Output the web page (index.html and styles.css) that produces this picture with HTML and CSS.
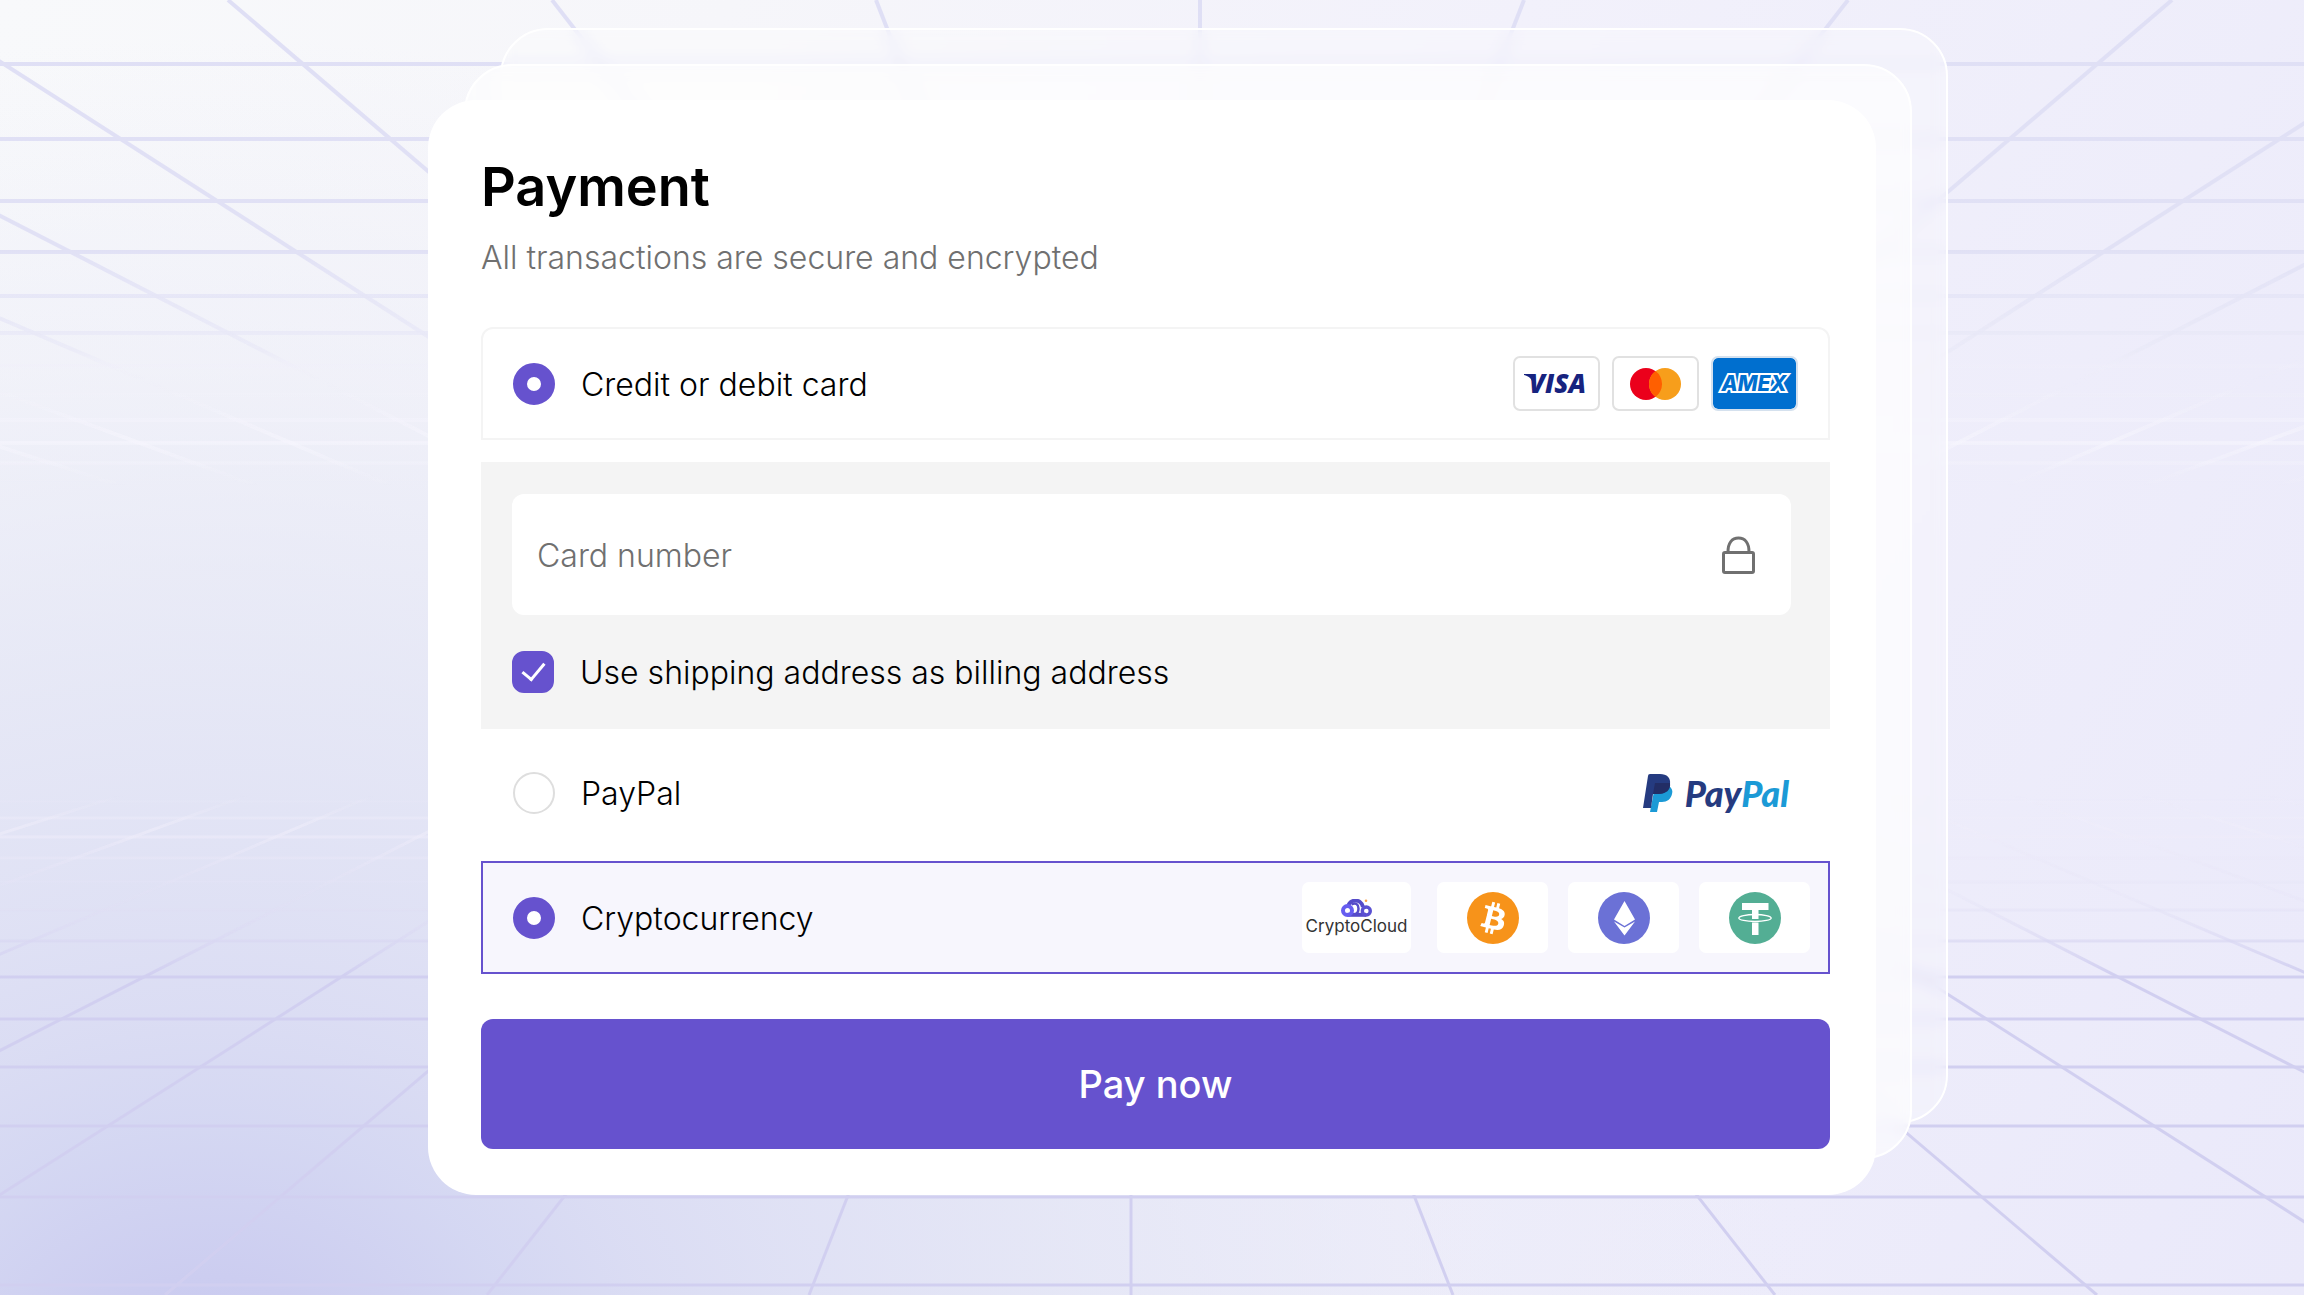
FILE: index.html
```html
<!DOCTYPE html>
<html lang="en">
<head>
  <meta charset="UTF-8">
  <meta name="viewport" content="width=device-width, initial-scale=1.0">
  <title>Payment</title>
  <link rel="stylesheet" href="styles.css">
</head>
<body>
  <!-- Perspective grid: ceiling and floor -->
  <svg class="grid-bg" viewBox="0 0 2304 1295" preserveAspectRatio="xMidYMid slice" aria-hidden="true">
    <defs>
      <linearGradient id="ceiling" gradientUnits="userSpaceOnUse" x1="0" y1="0" x2="0" y2="500">
        <stop offset="0" stop-color="#dfdff5"/>
        <stop offset="0.5" stop-color="#e1e1f5"/>
        <stop offset="0.7" stop-color="#e9e9f7" stop-opacity="0.7"/>
        <stop offset="0.76" stop-color="#f4f3fc" stop-opacity="0"/>
        <stop offset="0.88" stop-color="#f6f5fd" stop-opacity="0.6"/>
        <stop offset="0.97" stop-color="#f6f5fd" stop-opacity="0"/>
      </linearGradient>
      <linearGradient id="floor" gradientUnits="userSpaceOnUse" x1="0" y1="795" x2="0" y2="1295">
        <stop offset="0" stop-color="#efedfa" stop-opacity="0"/>
        <stop offset="0.07" stop-color="#efedfa" stop-opacity="0.6"/>
        <stop offset="0.2" stop-color="#e4e2f6" stop-opacity="0.2"/>
        <stop offset="0.36" stop-color="#d1cff0"/>
        <stop offset="1" stop-color="#d1cff0"/>
      </linearGradient>
    </defs>
    <g stroke="url(#ceiling)" fill="none">
      <path stroke-width="4" d="M0 64H2304M0 139H2304M0 201H2304M0 252H2304M0 296H2304M0 333H2304M0 366H2304M0 395H2304M0 420H2304M0 443H2304M0 463H2304M0 481H2304"/>
      <path stroke-width="4" d="M1200 832L-1716 0M1200 832L-1392 0M1200 832L-1068 0M1200 832L-744 0M1200 832L-420 0M1200 832L-96 0M1200 832L228 0M1200 832L552 0M1200 832L876 0M1200 832L1200 0M1200 832L1524 0M1200 832L1848 0M1200 832L2172 0M1200 832L2496 0M1200 832L2820 0M1200 832L3144 0M1200 832L3468 0M1200 832L3792 0"/>
    </g>
    <g stroke="url(#floor)" fill="none">
      <path stroke-width="3" d="M0 801H2304M0 818H2304M0 837H2304M0 858H2304M0 882H2304M0 910H2304M0 941H2304M0 977H2304M0 1019H2304M0 1067H2304M0 1126H2304M0 1197H2304M0 1285H2304"/>
      <path stroke-width="3" d="M1131 473L-1767 1295M1131 473L-1445 1295M1131 473L-1123 1295M1131 473L-801 1295M1131 473L-479 1295M1131 473L-157 1295M1131 473L165 1295M1131 473L487 1295M1131 473L809 1295M1131 473L1131 1295M1131 473L1453 1295M1131 473L1775 1295M1131 473L2097 1295M1131 473L2419 1295M1131 473L2741 1295M1131 473L3063 1295M1131 473L3385 1295M1131 473L3707 1295M1131 473L4029 1295"/>
    </g>
  </svg>

  <main class="stack">
    <div class="sheet sheet-back"></div>
    <div class="sheet sheet-middle"></div>

    <form class="card">
      <h1>Payment</h1>
      <p class="subtitle">All transactions are secure and encrypted</p>

      <div class="method method-card">
        <input type="radio" id="pay-card" name="card-method" checked>
        <label for="pay-card">Credit or debit card</label>
        <div class="brands">
          <span class="brand">
            <svg width="83" height="51" viewBox="0 0 83 51" role="img" aria-label="Visa">
              <path d="M9 16h8l3 5-2 5c-1-5-4-8-9-9z" fill="#17237f"/>
              <text class="visa" x="14" y="35">VISA</text>
            </svg>
          </span>
          <span class="brand">
            <svg width="83" height="51" viewBox="0 0 83 51" role="img" aria-label="Mastercard">
              <circle cx="32" cy="26" r="16" fill="#eb001b"/>
              <circle cx="51" cy="26" r="16" fill="#f79e1b"/>
              <path d="M41.500 13.100a16 16 0 0 1 0 25.800a16 16 0 0 1 0-25.800z" fill="#ff5f00"/>
            </svg>
          </span>
          <span class="brand brand-amex">
            <svg width="83" height="51" viewBox="0 0 83 51" role="img" aria-label="American Express">
              <text class="amex" x="41" y="33" text-anchor="middle">AMEX</text>
            </svg>
          </span>
        </div>
      </div>

      <div class="details">
        <div class="field">
          <input type="text" id="card-number" placeholder="Card number" aria-label="Card number">
          <svg class="lock" width="33" height="38" viewBox="0 0 33 38" aria-hidden="true">
            <path d="M6 16C6 7 10 2 16.500 2S27 7 27 16" fill="none" stroke="#707070" stroke-width="3"/>
            <rect x="1.500" y="16.500" width="30" height="20" rx="1.500" fill="none" stroke="#707070" stroke-width="3"/>
          </svg>
        </div>
        <div class="billing">
          <input type="checkbox" id="billing" checked>
          <label for="billing">Use shipping address as billing address</label>
        </div>
      </div>

      <div class="method method-paypal">
        <input type="radio" id="pay-paypal" name="method">
        <label for="pay-paypal">PayPal</label>
        <div class="paypal-logo">
          <svg width="30" height="38" viewBox="0 0 30 38" aria-hidden="true">
            <path d="M12 12h14c3 2 4 5 3 8-1 5-5 8-10 8h-3l-2 10H7z" fill="#1b9ad6"/>
            <path d="M5 2q0-2 2-2h10c7 0 11 4 10 10-1 7-6 10-12 10h-5L8 34H0z" fill="#253b80"/>
            <path d="M12 9h15c1 7-4 11-12 11h-5z" fill="#222d65"/>
          </svg>
          <span class="paypal-name">Pay<span>Pal</span></span>
        </div>
      </div>

      <div class="method method-crypto">
        <input type="radio" id="pay-crypto" name="method" checked>
        <label for="pay-crypto">Cryptocurrency</label>
        <div class="coins">
          <span class="coin coin-cloud">
            <svg width="31" height="18" viewBox="0 0 31 18" aria-hidden="true">
              <path d="M6.500 15.800H25" stroke="#554bc9" stroke-width="4"/>
              <path d="M7 8C8 0 20-1 22 8" fill="none" stroke="#554bc9" stroke-width="4"/>
              <path d="M10.500 5.500c4-2.500 7 0 7 4s-2 5.500-4 6" fill="none" stroke="#554bc9" stroke-width="2.500"/>
              <circle cx="25.300" cy="12" r="4" fill="none" stroke="#5a50d2" stroke-width="3.400"/>
              <circle cx="6.500" cy="11.500" r="4.500" fill="none" stroke="#665df0" stroke-width="4"/>
              <circle cx="25" cy="1.800" r="1.300" fill="#f9a24a"/>
            </svg>
            <span>CryptoCloud</span>
          </span>
          <span class="coin">
            <svg width="52" height="52" viewBox="0 0 32 32" role="img" aria-label="Bitcoin">
              <circle cx="16" cy="16" r="16" fill="#f7931a"/>
              <path fill="#fff" d="M23.189 14.020c.314-2.096-1.283-3.223-3.465-3.975l.708-2.840-1.728-.430-.690 2.765c-.454-.114-.920-.220-1.385-.326l.695-2.783L15.596 6l-.708 2.839c-.376-.086-.746-.170-1.104-.260l.002-.009-2.384-.595-.460 1.846s1.283.294 1.256.312c.700.175.826.638.805 1.006l-.806 3.235c.048.012.110.030.180.057l-.183-.045-1.130 4.532c-.086.212-.303.531-.793.410.018.025-1.256-.313-1.256-.313l-.858 1.978 2.250.561c.418.105.828.215 1.231.318l-.715 2.872 1.727.430.708-2.840c.472.127.930.245 1.378.357l-.706 2.828 1.728.430.715-2.866c2.948.558 5.164.333 6.097-2.333.752-2.146-.037-3.385-1.588-4.192 1.130-.260 1.980-1.003 2.207-2.538zm-3.950 5.538c-.533 2.147-4.148.986-5.320.695l.950-3.805c1.172.293 4.929.872 4.370 3.110zm.535-5.569c-.487 1.953-3.495.960-4.470.717l.860-3.450c.975.243 4.118.696 3.610 2.733z"/>
            </svg>
          </span>
          <span class="coin">
            <svg width="52" height="52" viewBox="0 0 52 52" role="img" aria-label="Ethereum">
              <circle cx="26" cy="26" r="26" fill="#6b71d6"/>
              <path d="M26.500 9L37 27.500 26.500 34 16 27.500zM16 29.500l10.500 6L37 29.500 26.500 43.500z" fill="#fff"/>
            </svg>
          </span>
          <span class="coin">
            <svg width="52" height="52" viewBox="0 0 52 52" role="img" aria-label="Tether">
              <circle cx="26" cy="26" r="26" fill="#53ae94"/>
              <path d="M13 11h26.500v7h-10v9h-6.500v-9H13zM23 30.500h6.500V43H23z" fill="#fff"/>
              <ellipse cx="26" cy="26" rx="16.200" ry="3.500" fill="none" stroke="#fff" stroke-width="1.300"/>
            </svg>
          </span>
        </div>
      </div>

      <button type="button" class="pay">Pay now</button>
    </form>
  </main>
</body>
</html>
```
FILE: styles.css
```css
* { box-sizing: border-box; }

:root {
  --accent: #6652ce;
  --muted: #707070;
  --panel: #f4f4f4;
}

body {
  margin: 0;
  min-height: 100vh;
  display: flex;
  align-items: center;
  justify-content: center;
  overflow-x: hidden;
  font-family: Inter, "Open Sans", sans-serif;
  font-size: 32px;
  font-weight: 300;
  line-height: 44px;
  color: #000;
  background:
    radial-gradient(ellipse 70% 105% at 9% 108%,
      #c7c8ef 0%,
      #cccdf0 9%,
      rgba(211, 214, 242, 0.96) 20%,
      rgba(217, 219, 243, 0.94) 28%,
      rgba(221, 223, 244, 0.9) 37%,
      rgba(227, 229, 245, 0.8) 55%,
      rgba(233, 234, 247, 0.45) 76%,
      rgba(238, 238, 249, 0) 100%),
    linear-gradient(120deg, #f8f9fb 0%, #f6f6fa 24%, #f2f1fb 50%, #eae9fa 100%);
}

/* Background grid */
.grid-bg {
  position: fixed;
  inset: 0;
  width: 100%;
  height: 100%;
}

/* Card and the two glass sheets behind it */
.stack {
  position: relative;
  width: 90%;
  max-width: 1448px;
}
.sheet {
  position: absolute;
  inset: 0;
  border: 2px solid #fff;
  border-radius: 48px;
  background: rgba(255, 255, 255, 0.3);
  backdrop-filter: blur(7px);
}
.sheet-back { transform: translate(72px, -72px); }
.sheet-middle {
  transform: translate(36px, -36px);
  background: rgba(255, 255, 255, 0.6);
}

.card {
  position: relative;
  padding: 54px 46px 46px 53px;
  border-radius: 48px;
  background: #fff;
}
h1 {
  margin: 0;
  font-size: 54px;
  line-height: 66px;
  font-weight: 600;
}
.subtitle {
  margin: 16px 0 47px;
  color: var(--muted);
}

/* Payment methods */
.method {
  display: flex;
  align-items: center;
  min-height: 113px;
  padding: 0 30px;
  border: 2px solid transparent;
}
.method-card {
  border-color: var(--panel);
  border-radius: 12px 12px 0 0;
}
.method-paypal {
  min-height: 128px;
  margin-bottom: 4px;
  padding-right: 39px;
}
.method-crypto {
  padding-right: 18px;
  border-color: var(--accent);
  background: #f7f6fd;
}
.method label,
.billing label {
  margin-left: 26px;
  padding-top: 2px;
}

input[type="radio"],
input[type="checkbox"] {
  appearance: none;
  flex: none;
  width: 42px;
  height: 42px;
  margin: 0;
  border: 2px solid #dedede;
  border-radius: 50%;
  background: #fff;
}
input[type="radio"]:checked { border: 14px solid var(--accent); }
input[type="checkbox"] {
  display: grid;
  place-items: center;
  border-radius: 12px;
}
input[type="checkbox"]:checked {
  border-color: var(--accent);
  background: var(--accent);
}
input[type="checkbox"]:checked::before {
  content: "";
  width: 10px;
  height: 19px;
  margin-bottom: 6px;
  border: solid #fff;
  border-width: 0 3px 3px 0;
  transform: rotate(40deg);
}

/* Card brands */
.brands {
  display: flex;
  gap: 12px;
  margin-left: auto;
}
.brand {
  display: flex;
  border: 2px solid #e1e1e1;
  border-radius: 7px;
}
.brand-amex {
  border-color: #d5e1ee;
  background: #006fcf;
  background-clip: padding-box;
}
.visa {
  font: italic 800 26px "Open Sans", sans-serif;
  fill: #17237f;
}
.amex {
  font: italic 800 21px Inter, sans-serif;
  fill: #006fcf;
  stroke: #fff;
  stroke-width: 4px;
  paint-order: stroke;
}

/* Card details */
.details {
  margin-top: 22px;
  padding: 32px 39px 36px 31px;
  background: var(--panel);
}
.field {
  display: flex;
  align-items: center;
  height: 121px;
  padding: 0 36px 0 25px;
  border-radius: 12px;
  background: #fff;
}
.field input {
  flex: 1;
  min-width: 0;
  height: 100%;
  padding: 2px 0 0;
  border: 0;
  outline: 0;
  font: inherit;
  background: none;
}
.field input::placeholder {
  color: var(--muted);
  opacity: 1;
}
.billing {
  display: flex;
  align-items: center;
  height: 42px;
  margin-top: 36px;
}

/* PayPal */
.paypal-logo {
  display: flex;
  align-items: center;
  gap: 12px;
  margin-left: auto;
}
.paypal-name {
  font: italic 900 36px/38px Lato, sans-serif;
  color: #253b80;
}
.paypal-name span { color: #1b9ad6; }

/* Coins */
.coins {
  display: flex;
  gap: 20px;
  margin-left: auto;
}
.coin {
  display: flex;
  align-items: center;
  justify-content: center;
  width: 111px;
  height: 71px;
  border-radius: 7px;
  background: #fff;
}
.coin-cloud {
  flex-direction: column;
  width: 109px;
  margin-right: 6px;
  font-size: 17px;
  line-height: 19px;
  font-weight: 400;
  color: #333;
}

.pay {
  display: block;
  width: 100%;
  height: 130px;
  margin-top: 45px;
  border: 0;
  border-radius: 12px;
  font: 500 38px Inter, sans-serif;
  color: #fff;
  background: var(--accent);
  cursor: pointer;
}
```
